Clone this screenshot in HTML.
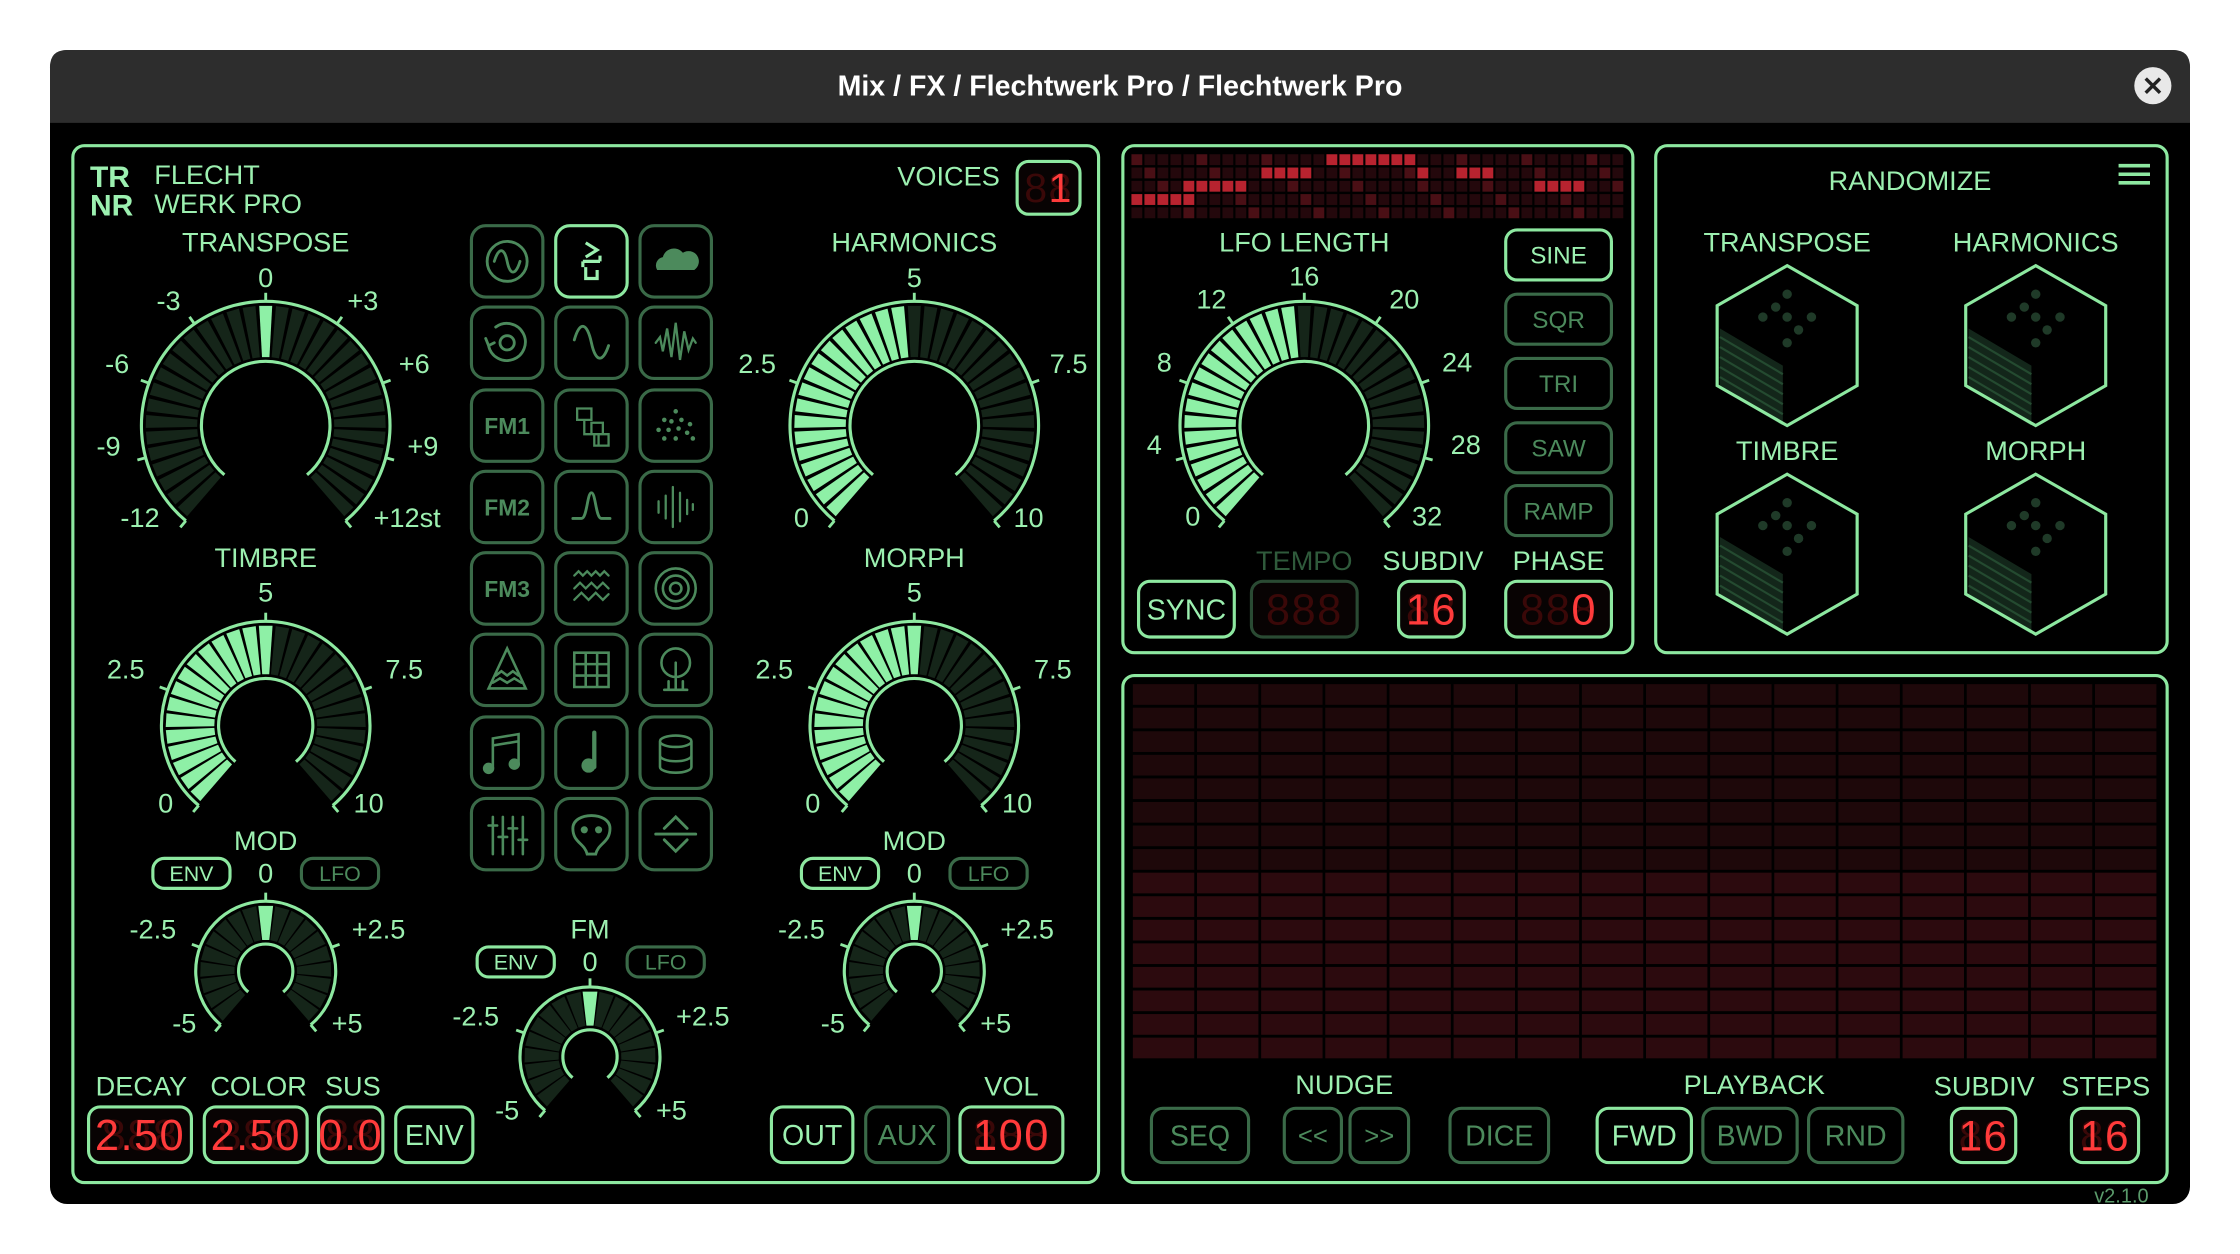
<!DOCTYPE html>
<html><head><meta charset="utf-8"><style>
html,body{margin:0;padding:0;background:#fff;}
svg{display:block}
text{font-family:"Liberation Sans Narrow","Liberation Sans",sans-serif;}
</style></head><body>
<svg id="s" width="2240" height="1254" viewBox="0 0 1568 878" preserveAspectRatio="none" xmlns="http://www.w3.org/2000/svg">
<rect x="0" y="0" width="1568" height="878" fill="#fff"/>
<rect x="35" y="35" width="1498" height="808" rx="12" fill="#000"/>
<path d="M47 35 H1521 Q1533 35 1533 47 V86 H35 V47 Q35 35 47 35Z" fill="#2d2d2d"/>
<text x="784" y="67" text-anchor="middle" fill="#fff" font-size="20" font-weight="bold" style="font-family:'Liberation Sans',sans-serif">Mix / FX / Flechtwerk Pro / Flechtwerk Pro</text>
<circle cx="1507" cy="60" r="13" fill="#e8e8e8"/>
<path d="M1502 55 L1512 65 M1512 55 L1502 65" stroke="#222" stroke-width="2.4"/>

<g fill="none" stroke="#8de8a0" stroke-width="2.2">
<rect x="51" y="102" width="718" height="726" rx="8"/>
<rect x="786" y="102" width="357" height="355" rx="8"/>
<rect x="1159" y="102" width="358" height="355" rx="8"/>
<rect x="786" y="473" width="731" height="355" rx="8"/>
</g>
<g id="dyn"></g>

<g fill="#9cf0b0" font-size="19" text-anchor="middle">
<text x="63" y="131" text-anchor="start" font-weight="bold" font-size="21">TR</text>
<text x="63" y="151" text-anchor="start" font-weight="bold" font-size="21">NR</text>
<text x="108" y="129" text-anchor="start">FLECHT</text>
<text x="108" y="149" text-anchor="start">WERK PRO</text>
<text x="664" y="130">VOICES</text>
<text x="186" y="176">TRANSPOSE</text><text x="640" y="176">HARMONICS</text>
<text x="186" y="397">TIMBRE</text><text x="640" y="397">MORPH</text>
<text x="186" y="595">MOD</text><text x="640" y="595">MOD</text><text x="413" y="657">FM</text>
<text x="186" y="201">0</text><text x="118" y="217">-3</text><text x="254" y="217">+3</text>
<text x="82" y="261">-6</text><text x="290" y="261">+6</text><text x="76" y="319">-9</text><text x="296" y="319">+9</text>
<text x="98" y="369">-12</text><text x="285" y="369">+12st</text>
<text x="640" y="201">5</text><text x="530" y="261">2.5</text><text x="748" y="261">7.5</text><text x="561" y="369">0</text><text x="720" y="369">10</text>
<text x="186" y="421">5</text><text x="88" y="475">2.5</text><text x="283" y="475">7.5</text><text x="116" y="569">0</text><text x="258" y="569">10</text>
<text x="640" y="421">5</text><text x="542" y="475">2.5</text><text x="737" y="475">7.5</text><text x="569" y="569">0</text><text x="712" y="569">10</text>
<text x="186" y="618">0</text><text x="640" y="618">0</text><text x="413" y="680">0</text>
<text x="107" y="657">-2.5</text><text x="265" y="657">+2.5</text><text x="129" y="723">-5</text><text x="243" y="723">+5</text>
<text x="561" y="657">-2.5</text><text x="719" y="657">+2.5</text><text x="583" y="723">-5</text><text x="697" y="723">+5</text>
<text x="333" y="718">-2.5</text><text x="492" y="718">+2.5</text><text x="355" y="784">-5</text><text x="470" y="784">+5</text>
<text x="99" y="767">DECAY</text><text x="181" y="767">COLOR</text><text x="247" y="767">SUS</text><text x="708" y="767">VOL</text>
<text x="913" y="176">LFO LENGTH</text>
<text x="913" y="200">16</text><text x="848" y="216">12</text><text x="983" y="216">20</text><text x="815" y="260">8</text><text x="1020" y="260">24</text>
<text x="808" y="318">4</text><text x="1026" y="318">28</text><text x="835" y="368">0</text><text x="999" y="368">32</text>
<text x="913" y="399" fill="#2f5a3b">TEMPO</text><text x="1003" y="399">SUBDIV</text><text x="1091" y="399">PHASE</text>
<text x="1337" y="133">RANDOMIZE</text>
<text x="1251" y="176">TRANSPOSE</text><text x="1425" y="176">HARMONICS</text><text x="1251" y="322">TIMBRE</text><text x="1425" y="322">MORPH</text>
<text x="941" y="766">NUDGE</text><text x="1228" y="766">PLAYBACK</text><text x="1389" y="767">SUBDIV</text><text x="1474" y="767">STEPS</text>
<text x="1485" y="842" font-size="14" fill="#5a9a6a">v2.1.0</text>
</g>
<g stroke="#8de8a0" stroke-width="2.5"><path d="M1483 116 H1505 M1483 122 H1505 M1483 128 H1505"/></g>

<g id="btns" font-size="18" text-anchor="middle"></g>
</svg>
<script>
const NS="http://www.w3.org/2000/svg",D=document.getElementById('dyn'),B=document.getElementById('btns');
function el(t,a,p){const e=document.createElementNS(NS,t);for(const k in a)e.setAttribute(k,a[k]);(p||D).appendChild(e);return e;}
function P(cx,cy,r,a){a=a*Math.PI/180;return [cx+r*Math.sin(a),cy-r*Math.cos(a)];}
function arc(cx,cy,r,a0,a1){const p0=P(cx,cy,r,a0),p1=P(cx,cy,r,a1);return `M${p0} A${r} ${r} 0 ${a1-a0>180?1:0} 1 ${p1}`;}
function knob(cx,cy,ro,ri,mode,val,ticks){
 const S=-140,E=140,N=Math.round(ro*0.42);const step=(E-S)/N;
 for(let i=0;i<N;i++){const a0=S+i*step+0.9,a1=S+(i+1)*step-0.9;
  const mid=(a0+a1)/2;let on=false;
  if(mode=='fill')on=mid<S+(E-S)*val;else on=Math.abs(mid)<step*0.6;
  const p=[P(cx,cy,ri,a0),P(cx,cy,ro,a0),P(cx,cy,ro,a1),P(cx,cy,ri,a1)];
  el('polygon',{points:p.map(q=>q.join(',')).join(' '),fill:on?'#8ef0a6':'#152519'});}
 el('path',{d:arc(cx,cy,ro+3,S,E),fill:'none',stroke:'#8de8a0','stroke-width':2.2});
 el('path',{d:arc(cx,cy,ri-3,S,E),fill:'none',stroke:'#8de8a0','stroke-width':2.2});
 (ticks||[-140,-105,-70,-35,0,35,70,105,140]).forEach(a=>{const p=P(cx,cy,ro+3,a),q=P(cx,cy,ro+9,a);el('line',{x1:p[0],y1:p[1],x2:q[0],y2:q[1],stroke:'#8de8a0','stroke-width':2});});
}
knob(186,298,84,48,'c',0);
knob(640,298,84,48,'fill',0.5,[-140,-70,0,70,140]);
knob(186,508,70,36,'fill',0.5,[-140,-70,0,70,140]);
knob(640,508,70,36,'fill',0.5,[-140,-70,0,70,140]);
knob(913,298,84,48,'fill',0.5);
knob(186,680,46,22,'c',0,[-140,-70,0,70,140]);
knob(640,680,46,22,'c',0,[-140,-70,0,70,140]);
knob(413,740,46,22,'c',0,[-140,-70,0,70,140]);
function btn(x,y,w,h,t,on,fs){el('rect',{x,y,width:w,height:h,rx:8,fill:'none',stroke:on?'#8de8a0':'#3a6a48','stroke-width':2.2},B);
 if(t){const e=el('text',{x:x+w/2,y:y+h/2+(fs||18)*0.36,fill:on?'#9cf0b0':'#4c8a5c','font-size':fs||18},B);e.textContent=t;}}
btn(107,601,54,21,'ENV',1,15);btn(211,601,54,21,'LFO',0,15);
btn(561,601,54,21,'ENV',1,15);btn(665,601,54,21,'LFO',0,15);
btn(334,663,54,21,'ENV',1,15);btn(439,663,54,21,'LFO',0,15);
btn(277,775,54,39,'ENV',1,20);btn(540,775,57,39,'OUT',1,20);btn(606,775,58,39,'AUX',0,20);
btn(1054,161,74,35,'SINE',1,17);btn(1054,206,74,35,'SQR',0,17);btn(1054,251,74,35,'TRI',0,17);btn(1054,296,74,35,'SAW',0,17);btn(1054,340,74,35,'RAMP',0,17);
btn(797,407,67,39,'SYNC',1,20);
btn(806,776,68,38,'SEQ',0,20);btn(899,776,40,38,'<<',0,18);btn(945,776,41,38,'>>',0,18);btn(1015,776,69,38,'DICE',0,20);
btn(1118,776,66,38,'FWD',1,20);btn(1192,776,66,38,'BWD',0,20);btn(1266,776,66,38,'RND',0,20);
function disp(x,y,w,h,txt,n,on){el('rect',{x,y,width:w,height:h,rx:8,fill:'#080303',stroke:on===0?'#2a4a33':'#8de8a0','stroke-width':2.2});
 const fs=h*0.78;const g=el('text',{x:x+w/2,y:y+h/2+fs*0.35,'text-anchor':'middle','font-size':fs,fill:'#3a0808','letter-spacing':1});g.textContent='8'.repeat(n);
 const t=el('text',{x:x+w/2,y:y+h/2+fs*0.35,'text-anchor':'middle','font-size':fs,fill:'#ff3b3b','letter-spacing':1});t.textContent=txt;}
disp(712,113,44,37,'\u2007'+'1',2);
disp(62,775,72,39,'2.50',3);disp(143,775,72,39,'2.50',3);disp(223,775,45,39,'0.0',2);disp(672,775,72,39,'100',3);
disp(876,407,74,39,'',3,0);disp(979,407,46,39,'16',2);disp(1054,407,74,39,'\u2007\u20070',3);
disp(1366,776,45,38,'16',2);disp(1450,776,47,38,'16',2);
const hot=[[15,16,17,18,19,20,21],[10,11,12,13,22,25,26,27],[4,5,6,7,8,31,32,33,34],[0,1,2,3,4],[]];
for(let r=0;r<5;r++)for(let c=0;c<38;c++){const h=hot[r].includes(c);el('rect',{x:792+c*9.1,y:108+r*9.3,width:7.6,height:7.6,fill:h?'#b8232f':((r*7+c*3)%5==0?'#4a0f15':'#24080c')});}
for(let r=0;r<16;r++)for(let c=0;c<16;c++){el('rect',{x:793+c*44.9,y:479+r*16.5,width:43,height:14.5,fill:r<8?'#1e080a':'#2c0a0e'});}
function die(cx,cy){const pts=[[cx,cy-56],[cx+49,cy-28],[cx+49,cy+28],[cx,cy+56],[cx-49,cy+28],[cx-49,cy-28]];
 el('polygon',{points:`${cx-47},${cy-12} ${cx-3},${cy+14} ${cx-3},${cy+54} ${cx-47},${cy+28}`,fill:'#13261a'});
 for(let i=0;i<6;i++)el('line',{x1:cx-47,y1:cy-6+i*7,x2:cx-3,y2:cy+20+i*7,stroke:'#244a30','stroke-width':1.5});
 el('polygon',{points:pts.map(p=>p.join(',')).join(' '),fill:'none',stroke:'#8de8a0','stroke-width':2.2});
 [[0,-36],[-8,-27],[-17,-20],[0,-20],[17,-20],[8,-11],[0,-2]].forEach(d=>el('circle',{cx:cx+d[0],cy:cy+d[1],r:3.3,fill:'#1f3a28'}));}
die(1251,242);die(1425,242);die(1251,388);die(1425,388);
const xs=[355,414,473],ys=[183,240,298,355,412,469,527,584];
ys.forEach((y,ri)=>xs.forEach((x,ci)=>{const on=ri==0&&ci==1;el('rect',{x:x-25,y:y-25,width:50,height:50,rx:10,fill:'none',stroke:on?'#8de8a0':'#3a6a48','stroke-width':2.2});}));
function ip(d,x,y,w){el('path',{d,transform:`translate(${x},${y})`,fill:'none',stroke:'#4c8a5c','stroke-width':w||2,'stroke-linecap':'round'});}
ip('M-14 0 A14 14 0 1 0 14 0 A14 14 0 1 0 -14 0 M-9 0 C-6 -10 -2 -10 0 0 C2 10 6 10 9 0',355,183);
el('path',{d:'M-4 -13 L4 -8 L-4 -3 M-6 0 H6 M-6 0 V4 M6 0 V-4 M-4 4 V12 H4 V6',transform:'translate(414,183)',fill:'none',stroke:'#9cf0b0','stroke-width':2.2});
el('path',{d:'M-13 6 A6 6 0 0 1 -9 -3 A8 8 0 0 1 5 -6 A6 6 0 0 1 13 6 Z',transform:'translate(473,183)',fill:'#4c8a5c'});
ip('M-8 -11 A13 13 0 1 1 -13 2 M-13 2 L-15 -3 M-13 2 L-9 0 M5 0 A5 5 0 1 1 -5 0 A5 5 0 1 1 5 0',355,240);
ip('M-12 -2 C-8 -16 -3 -14 0 0 C3 14 8 14 12 2',414,240);
ip('M-14 0 L-11 -4 L-9 6 L-6 -10 L-3 10 L0 -14 L3 12 L6 -8 L9 5 L12 -3 L14 0',473,240,1.6);
[['FM1',298],['FM2',355],['FM3',412]].forEach(a=>{const t=el('text',{x:355,y:a[1]+6,'text-anchor':'middle','font-size':16,fill:'#4c8a5c','font-weight':'bold'});t.textContent=a[0];});
ip('M-10 -12 H0 V-4 H-10 Z M-5 -4 V6 H5 V14 M0 -2 H8 V6 H0 Z M2 6 H12 V14 H2 Z',414,298,1.6);
[[0,-10],[-8,-4],[-3,-3],[4,-4],[10,-1],[-12,3],[-5,3],[2,2],[8,5],[-8,9],[0,9],[12,9]].forEach(d=>el('circle',{cx:473+d[0],cy:298+d[1],r:1.6,fill:'#4c8a5c'}));
ip('M-13 8 H-7 C-3 8 -3 -10 0 -10 C3 -10 3 8 7 8 H13',414,355);
ip('M-12 -4 V4 M-7 -8 V8 M-2 -14 V14 M3 -10 V10 M8 -5 V5 M12 -2 V2',473,355,1.6);
ip('M-12 -9 L-9 -12 L-6 -9 L-3 -12 L0 -9 L3 -12 L6 -9 L9 -12 L12 -9 M-12 0 L-8 -4 L-4 0 L0 -4 L4 0 L8 -4 L12 0 M-12 8 L-7 3 L-2 8 L3 3 L8 8 L12 4',414,412,1.6);
ip('M14 0 A14 14 0 1 1 -14 0 A14 14 0 1 1 14 0 M9 0 A9 9 0 1 1 -9 0 A9 9 0 1 1 9 0 M4 0 A4 4 0 1 1 -4 0 A4 4 0 1 1 4 0',473,412,1.8);
ip('M0 -15 L13 13 H-13 Z M-8 4 L-4 1 L0 4 L4 1 L8 4 M-10 9 L-5 6 L0 9 L5 6 L10 9',355,469,1.8);
ip('M-12 -12 H12 V12 H-12 Z M-4 -12 V12 M4 -12 V12 M-12 -4 H12 M-12 4 H12',414,469,1.8);
ip('M10 -5 A10 10 0 1 1 -10 -5 A10 10 0 1 1 10 -5 M0 -5 V14 M-5 14 V8 M5 14 V8 M-8 14 H8',473,469,1.8);
ip('M-10 10 V-10 L8 -13 V8 M-10 -5 L8 -8',355,527,1.8);el('circle',{cx:342,cy:538,r:4,fill:'#4c8a5c'});el('circle',{cx:360,cy:535,r:4,fill:'#4c8a5c'});
ip('M2 -14 V10',414,527,3);el('circle',{cx:412,cy:536,r:5,fill:'#4c8a5c'});
ip('M-11 -8 A11 4 0 1 0 11 -8 A11 4 0 1 0 -11 -8 M-11 -8 V10 A11 4 0 0 0 11 10 V-8 M-11 2 A11 4 0 0 0 11 2',473,527,1.8);
ip('M-10 -12 V14 M-3 -12 V14 M4 -12 V14 M11 -12 V14 M-13 -6 H-7 M-6 2 H0 M1 -4 H7 M8 4 H14',355,584,1.8);
ip('M-13 -4 C-13 -16 13 -16 13 -4 C13 6 5 6 3 14 H-3 C-5 6 -13 6 -13 -4 Z',414,584,2);el('circle',{cx:409,cy:581,r:2.5,fill:'#4c8a5c'});el('circle',{cx:419,cy:581,r:2.5,fill:'#4c8a5c'});
ip('M-14 0 H14 M-8 -4 L0 -12 L8 -4 M-8 4 L0 12 L8 4',473,584,2);
</script>
</body></html>
